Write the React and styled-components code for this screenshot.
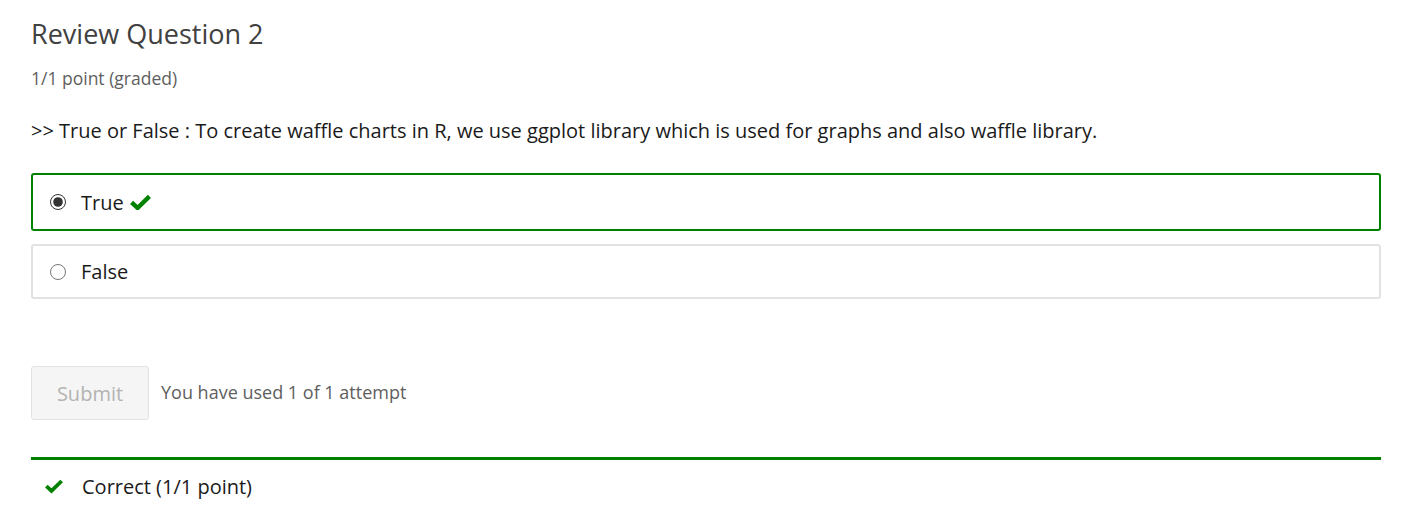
import React from 'react';
import styled, {createGlobalStyle} from 'styled-components';

const GlobalStyle = createGlobalStyle`
  body {
    margin: 0;
    background: #fff;
    font-family: "Open Sans", "Liberation Sans", sans-serif;
  }
`

const Check = ({size = 20}) => (
  <svg width={size} height={size * 0.8} viewBox="0 0 20 16">
    <path d="M1.5 8 L7.2 13.3 L18.5 2.2" fill="none" stroke="#008100" strokeWidth="4.2" strokeLinejoin="miter" />
  </svg>
)

function App() {
  return (
    <Page>
      <GlobalStyle />
      <Title>Review Question 2</Title>
      <Points>1/1 point (graded)</Points>
      <Question>&gt;&gt; True or False : To create waffle charts in R, we use ggplot library which is used for graphs and also waffle library.</Question>
      <Choices>
        <Choice correct>
          <Radio type="radio" name="q2" defaultChecked />
          <ChoiceLabel>True</ChoiceLabel>
          <Check size={21} />
        </Choice>
        <Choice>
          <Radio type="radio" name="q2" />
          <ChoiceLabel>False</ChoiceLabel>
        </Choice>
      </Choices>
      <Actions>
        <SubmitButton disabled>Submit</SubmitButton>
        <Attempts>You have used 1 of 1 attempt</Attempts>
      </Actions>
      <Notification>
        <Check size={18} />
        <NotificationText>Correct (1/1 point)</NotificationText>
      </Notification>
    </Page>
  );
}

export default App;

const Page = styled.div`
  padding: 16px 34px 0 31px;
  display: flex;
  flex-direction: column;
`

const Title = styled.h2`
  margin: 0;
  font-size: 27px;
  font-weight: 400;
  color: #414141;
  line-height: 36px;
`

const Points = styled.div`
  margin-top: 14px;
  font-size: 17.5px;
  color: #5e5e5e;
  line-height: 24px;
`

const Question = styled.p`
  margin: 27px 0 0;
  font-size: 20px;
  color: #1a1a1a;
  line-height: 28px;
`

const Choices = styled.div`
  margin-top: 28px;
  display: flex;
  flex-direction: column;
  gap: 13px;
`

const Choice = styled.label`
  display: flex;
  align-items: center;
  height: ${p => p.correct ? '58px' : '55px'};
  box-sizing: border-box;
  padding: 0 17px;
  border: 2px solid ${p => p.correct ? '#008100' : '#e2e2e2'};
  border-radius: 3px;
  font-size: 20px;
  color: #1a1a1a;
  svg {
    margin-left: 6px;
    margin-top: 0;
  }
`

const Radio = styled.input`
  margin: 0 15px 0 0;
  width: 16px;
  height: 16px;
  accent-color: #333;
`

const ChoiceLabel = styled.span`
  line-height: 27px;
`

const Actions = styled.div`
  margin-top: 67px;
  display: flex;
  align-items: center;
  gap: 12px;
`

const SubmitButton = styled.button`
  width: 118px;
  height: 54px;
  background: #f5f5f5;
  border: 1px solid #e2e2e2;
  border-radius: 3px;
  font-family: inherit;
  font-size: 20px;
  color: #b3b3b3;
`

const Attempts = styled.span`
  font-size: 18px;
  color: #5e5e5e;
  margin-top: -2px;
`

const Notification = styled.div`
  margin-top: 37px;
  border-top: 3px solid #008100;
  display: flex;
  align-items: center;
  padding: 13px 0 0 14px;
  gap: 19px;
`

const NotificationText = styled.span`
  font-size: 20px;
  line-height: 27px;
  color: #1a1a1a;
`
